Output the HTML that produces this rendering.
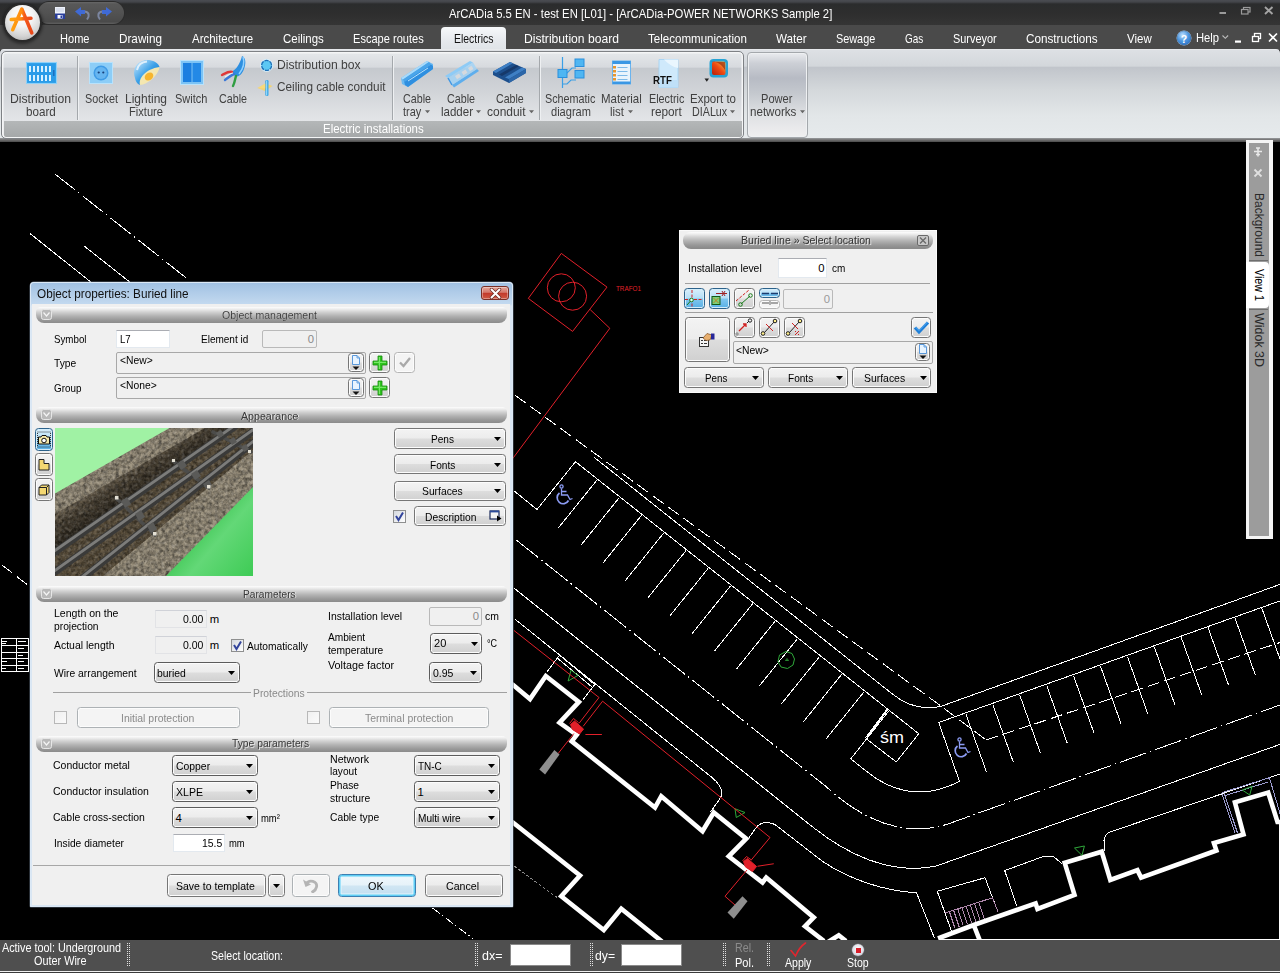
<!DOCTYPE html>
<html>
<head>
<meta charset="utf-8">
<title>ArCADia</title>
<style>
*{box-sizing:border-box;margin:0;padding:0}
html,body{width:1280px;height:973px;overflow:hidden;background:#000}
body{font-family:"Liberation Sans",sans-serif;font-size:12px;color:#000;position:relative}
.abs{position:absolute}
.t{position:absolute;white-space:nowrap;line-height:1}
/* title bar */
#titlebar{left:0;top:0;width:1280px;height:26px;background:linear-gradient(#4a4c52 0,#43454a 2px,#2b2c2d 4px,#2e2e2e 14px,#353535 25px)}
#tabrow{left:0;top:25px;width:1280px;height:25px;background:#4a4a4a}
#qat{left:38px;top:2px;width:86px;height:22px;border-radius:11px;background:linear-gradient(#686868 0,#585858 2px,#525252 50%,#4a4a4a 90%,#606060 100%);box-shadow:0 0 0 1px #2c2c2c}
#appbtn{left:4.500px;top:4.500px;width:35.500px;height:35.500px;border-radius:50%;background:radial-gradient(circle at 50% 30%,#fff 0,#f4f4f4 35%,#d4d4d4 68%,#a4a4a4 100%);box-shadow:0 0 0 2px #2a2a2a,0 1px 3px 3px rgba(0,0,0,.4)}
#acttab{left:441px;top:27px;width:65px;height:23px;border-radius:4px 4px 0 0;background:linear-gradient(#f6f8fa,#e6e9ed 60%,#dfe3e7)}
/* ribbon */
#ribbon{left:0;top:49px;width:1280px;height:93px;background:linear-gradient(#eceef0 0,#dde0e4 1.500px,#d3d7db 17px,#c1c5cb 18.500px,#d4d8db 41px,#e2e6e8 66px,#e6eaec 89px,#8e9092 89.500px,#6e6e6e 91px,#4a4a4a 93px);border-radius:4px 4px 0 0}
#grp{left:1px;top:51px;width:743px;height:88px;border-radius:5px;border:1px solid #7e8185;box-shadow:inset 0 0 0 1.500px #f4f5f6;background:linear-gradient(#e5e8eb 0,#d7dade 15px,#c5c9ce 16.500px,#d2d5d9 41px,#e0e2e5 63px,#e4e6e8 71px)}
#grplbl{left:4px;top:121px;width:738px;height:16px;background:linear-gradient(#b4b7b8,#a5a8a9);border-radius:0 0 2px 2px}
.sep{width:1px;background:#a4a8ac;box-shadow:1px 0 0 #eef0f2;top:56px;height:64px}
#pn{left:747px;top:52px;width:61px;height:86px;border-radius:4px;border:1px solid #a4a8ac;box-shadow:inset 0 0 0 1px #eef0f2;background:linear-gradient(#eaecef 0,#cdd0d6 10px,#b7bbc4 25px,#c4c8ce 40px,#dddfe2 60px,#eaeaec 76px,#f0f0f1 86px)}
/* status */
#status{left:0;top:940px;width:1280px;height:33px;background:linear-gradient(#4f4f4f 0,#4f4f4f 30.500px,#f0f0f0 31px,#f0f0f0 32px,#3a3a3a 32.500px)}
.grip{width:3px;border-left:1px dotted #e0e0e0;border-right:1px dotted #e0e0e0}

.shdr{border-radius:5px 5px 8px 8px;background:linear-gradient(#fdfdfd 0,#eeeeee 2px,#d2d2d2 5px,#b2b2b2 9px,#989898 13px,#8b8b8b 16px)}
.btn{border:1px solid #767676;border-radius:3.500px;background:linear-gradient(#f3f3f3 0,#ececec 48%,#dddddd 52%,#d0d0d0 100%);box-shadow:inset 0 0 0 1px #fcfcfc}
.btn.cmb{border-color:#5c5c5c}
.btn.dis{border-color:#b5b5b5;background:#f4f4f4}
.btn.dis2{border-color:#adb2b5;background:#f4f4f4}
.btn.act{border-color:#2c628b;background:linear-gradient(#d8effb 0,#b6dff6 48%,#80c6ee 52%,#58b0e6 100%);box-shadow:inset 0 0 0 1px #d4edfa}
.btn.def{border-color:#3c7fb1;box-shadow:inset 0 0 0 1.500px #5ecdf4, inset 0 0 0 2.500px #e4f6fd;background:linear-gradient(#f0f8fc 0,#e6f2f9 48%,#d0e6f3 52%,#c2def0 100%)}
.inp{background:#fff;border:1px solid #e3e9ef;border-top-color:#abadb3}
.inpd{background:#f0f0f0;border:1px solid #b9b9b9;border-radius:2px}
.inpd2{background:#f0f0f0;border:1px solid #e2e3e6;border-top-color:#d0d2d8}
.box{background:#f0f0f0;border:1px solid #a8a8a8;border-radius:2px}

.f{font-size:11px}
</style>
</head>
<body>
<svg class="abs" style="left:0;top:140px" width="1280" height="800" viewBox="0 140 1280 800" shape-rendering="crispEdges" fill="none">
<rect x="0" y="140" width="1280" height="800" fill="#000"/>
<g stroke="#fff" stroke-width="1">
<path d="M54.700 173.750 L187.500 279" stroke-dasharray="26 4 1.500 4"/>
<path d="M30.300 233.750 L92 283"/><path d="M84.400 246.250 L131 283"/>
<path d="M2 565 L27 584.500" stroke-dasharray="13.500 5.500"/>
<path d="M432.600 908 L473.300 939" stroke-dasharray="9 3 1.500 3"/>
<path d="M514.500 394.800 L941.250 706.250 L986.250 740" stroke-dasharray="13.500 5.500"/>
<path d="M986.250 740 L1280 642.500" stroke-dasharray="12 5"/>
<path d="M593.750 457 L893 694.500 Q915 712 941.250 706.250 L1280 584.400"/>
<path d="M514.500 491.250 L537 509.500 L575.500 461.750 L918.750 733.750"/>
<path d="M597.00 480.00 L558.60 527.60"/>
<path d="M619.25 497.66 L580.85 545.26"/>
<path d="M641.50 515.32 L603.10 562.92"/>
<path d="M663.75 532.98 L625.35 580.58"/>
<path d="M686.00 550.64 L647.60 598.24"/>
<path d="M708.25 568.30 L669.85 615.90"/>
<path d="M730.50 585.96 L692.10 633.56"/>
<path d="M752.75 603.62 L714.35 651.22"/>
<path d="M775.00 621.28 L736.60 668.88"/>
<path d="M797.25 638.94 L758.85 686.54"/>
<path d="M819.50 656.60 L781.10 704.20"/>
<path d="M841.75 674.26 L803.35 721.86"/>
<path d="M864.00 691.92 L825.60 739.52"/>
<path d="M887.500 710 L866.250 738.750 L896.250 762 L918.750 733.750"/>
<path d="M886.800 709.400 L865.500 738 M888.800 711 L850.500 759.200"/>
<path d="M850 758.250 L868 772.500 C886 787 918 803 959.500 781.400 L938.750 722.500 L1280 600.900"/>
<path d="M966.00 714.50 L986.50 772.00"/>
<path d="M992.90 704.85 L1013.40 762.35"/>
<path d="M1019.80 695.20 L1040.30 752.70"/>
<path d="M1046.70 685.55 L1067.20 743.05"/>
<path d="M1073.60 675.90 L1094.10 733.40"/>
<path d="M1100.50 666.25 L1121.00 723.75"/>
<path d="M1127.40 656.60 L1147.90 714.10"/>
<path d="M1154.30 646.95 L1174.80 704.45"/>
<path d="M1181.20 637.30 L1201.70 694.80"/>
<path d="M1208.10 627.65 L1228.60 685.15"/>
<path d="M1235.00 618.00 L1255.50 675.50"/>
<path d="M1261.90 608.35 L1282.40 665.85"/>
<path d="M516.250 540 L826 786.500 C858 816 902 841 951.250 822.800 L1280 705" stroke-dasharray="28 4 1.500 4"/>
<path d="M514.500 588.500 L812 826.500 C845 853 890 876 936.250 866 L1280 744.400"/>
<path d="M514.500 618.750 L712 777.500 Q727 790 719 800 L710.500 812"/>
<path d="M747.500 840 L755 829 Q762 819 775 824.500 L822 861 C850 880 885 891 916.500 892.750 L934.400 938"/>
<path d="M951.250 930.600 L937.200 891.250 L985 877.750 L998 912"/>
<path d="M1016.900 906.250 L1004.700 870.600 L1043 856.600 L1053.600 856.600 L1062.200 864"/>
<path d="M1104 851 L1104 840.600 Q1105 832 1114 830.700 L1280 774"/>
<path d="M546.500 672.400 L559.500 655.100 L594.700 684.600 L582.500 700.400 M558 658.700 L592.600 687.500"/>
<path d="M940 939.500 L1279.500 939.500 L1279.500 820"/>
</g>
<g stroke="#fff" stroke-width="1"><rect x="1.500" y="638.500" width="27" height="33"/><path d="M16.500 638.500v33 M1.500 645.500h27 M1.500 652.500h27 M1.500 658.500h27 M1.500 665.500h27"/><path d="M2 641.500h5 M2 643.500h4 M18 641.500h8 M18 648.500h6 M18 655.500h5 M2 661.500h5 M18 661.500h6 M2 668.500h4 M18 668.500h6" stroke-width="1.500"/></g>
<path d="M514.500 866.250 L558.750 898.750" stroke="#8a8a8a" stroke-width="1" stroke-dasharray="3 2"/>
<g stroke="#9c9cd0" stroke-width="1"><path d="M1221.500 792.800 L1235.100 833.500 M1223.800 792 L1237.400 832.700 M1222.500 792.500 L1269.400 777.700 L1280 813.500 M1224 796 L1268 782"/></g>
<g stroke="#b088ac" stroke-width="1"><path d="M945.600 912.800 L992.500 897.800 L998.100 911.900"/>
<path d="M949.40 911.60 L954.90 928.10"/>
<path d="M953.60 910.26 L959.10 926.76"/>
<path d="M957.80 908.92 L963.30 925.42"/>
<path d="M962.00 907.58 L967.50 924.08"/>
<path d="M966.20 906.24 L971.70 922.74"/>
<path d="M970.40 904.90 L975.90 921.40"/>
<path d="M974.60 903.56 L980.10 920.06"/>
<path d="M978.80 902.22 L984.30 918.72"/>
</g>
<g stroke="#fff" stroke-width="4.600" stroke-linejoin="miter" shape-rendering="geometricPrecision">
<path d="M512 684 L530 699 L545.800 676 L578.900 701.900 L559.500 722.700 L576.700 735 L571.700 741.400 L655 807.500 L661.250 796.250 L702.500 831.250 L713.750 812.500 L746.250 838.750 L728.750 856.250 L762.500 882.500 L766.250 877.500 L813.750 917.500 L805 926.250 L824 941"/>
<path d="M828 942 L838.750 935.300 L846 941"/>
<path d="M512 821.700 L580 875.500 L561.250 896.250 L603.750 930 L621.250 908.750 L662 941.500"/>
<path d="M938 938.500 L973.750 925 L1035.600 903.400 L1037.500 909 L1074.500 894.900 L1064.700 862.800 L1101.700 851.700 L1110.300 880 L1137.400 870.200 L1141.100 877.600 L1216.400 850.500 L1213.900 843 L1243.500 834.400 L1234.900 802.400 L1268.200 792.500 L1277.500 822 L1282 822 M973.750 925 L980 941"/>
</g>
<g stroke="#2fa83a" stroke-width="1" shape-rendering="geometricPrecision"><path d="M571 670.200 L578.200 675.300 L568.100 681z"/><path d="M735 808.750 L745 812.500 L736.250 817.500z"/><path d="M1074.500 848 L1084.400 846 L1082 855.400z"/><path d="M1242.300 790 L1252.100 786.300 L1249.700 795z"/>
<path d="M786 651.500 L792 653.500 L794.500 659 L793 665 L787.500 668.500 L781 667 L778 661.500 L779.500 655z"/><path d="M785.500 660.500 l1.500-2 l1.500 2z" stroke-width=".8"/></g>
<g stroke="#e2202a" stroke-width="1" shape-rendering="geometricPrecision">
<path d="M561.300 253.400 L607 287.100 L572.600 331.400 L528.300 298.400z"/><circle cx="561.300" cy="287.800" r="14"/><circle cx="572.600" cy="296.200" r="14"/>
<path d="M590.200 309.600 L609.800 328.300 L512 459.500"/>
<path d="M514 630.500 L599 697.500 L578.900 723.500"/>
<path d="M583.200 726.300 L602.600 701.200 L770 837.500 L751.250 860"/>
<path d="M569.600 723.500 L573.500 718.500 L578.500 722.500"/>
<path d="M570.500 724.500 L574.500 721 L583.500 729 L579.600 734 L572.400 729.500z" fill="#e2202a"/>
<path d="M585.400 734.500 L601.900 734.500"/><path d="M573.900 733.500 L558 753.700"/>
<path d="M742.500 861 L746.500 856.500 L751.500 860"/>
<path d="M743.500 861.500 L747.500 858.500 L756.500 866.500 L752.500 871.500 L745.500 867z" fill="#e2202a"/>
<path d="M757.500 866.250 L773.750 863.750"/><path d="M747 870 L725 896.250 L735 905"/>
</g>
<text x="616" y="291" font-family="Liberation Sans, sans-serif" font-size="7.500" fill="#e2202a" textLength="25" lengthAdjust="spacingAndGlyphs" shape-rendering="geometricPrecision">TRAFO1</text>
<g fill="#8e8e8e" shape-rendering="geometricPrecision"><path d="M554.400 750 L559.500 754.400 L545.100 774.500 L539.300 769.500z"/><path d="M742.500 896.250 L747.500 901.250 L733.750 918.750 L727.500 912.500z"/></g>
<g transform="translate(554 484)" stroke="#8c9cf4" stroke-width="1.300" shape-rendering="geometricPrecision"><circle cx="7.500" cy="2.500" r="1.600"/><path d="M7.500 4.500 V11 H13.500 L16 15.500 L18.500 14.500 M7.500 7.500 H12.500"/><path d="M5.500 9 A6 6 0 1 0 14.500 16.500" stroke-width="1.700"/></g>
<g transform="translate(952 737)" stroke="#8c9cf4" stroke-width="1.300" shape-rendering="geometricPrecision"><circle cx="7.500" cy="2.500" r="1.600"/><path d="M7.500 4.500 V11 H13.500 L16 15.500 L18.500 14.500 M7.500 7.500 H12.500"/><path d="M5.500 9 A6 6 0 1 0 14.500 16.500" stroke-width="1.700"/></g>
<text x="880" y="742.500" font-family="Liberation Sans, sans-serif" font-size="17" fill="#fff" textLength="24" lengthAdjust="spacingAndGlyphs" shape-rendering="geometricPrecision">śm</text>
</svg>
<div class="abs" id="titlebar"></div>
<div class="abs" id="tabrow"></div>
<div class="t" style="left:448.80px;top:7.93px;font-size:12.6px;color:#fff;transform:scaleX(0.8979);transform-origin:0 0;">ArCADia 5.5 EN - test EN [L01] - [ArCADia-POWER NETWORKS Sample 2]</div>
<div class="abs" id="qat"></div>
<svg class="abs" style="left:50px;top:3px" width="70" height="20" viewBox="0 0 70 20">
<rect x="5" y="4" width="10" height="12" fill="#2a3f9c"/><rect x="5" y="4" width="10" height="6.500" fill="#eef2fa"/><rect x="6" y="5.500" width="8" height="1" fill="#c8d0e4"/><rect x="6" y="7.500" width="8" height="1" fill="#c8d0e4"/><rect x="7.500" y="12" width="5" height="3.500" fill="#f4f6fb"/><rect x="10.500" y="12.500" width="1.500" height="2.500" fill="#2a3f9c"/>
<path d="M25 8.500 l6-4.500 v3 h4 v4 h-4 v2.500z" fill="#3f6ad6"/><path d="M35 8.500 c4 1 5 4 2 8" stroke="#7c86a0" stroke-width="2" fill="none"/>
<path d="M62 8.500 l-6-4.500 v3 h-4 v4 h4 v2.500z" fill="#3f6ad6"/><path d="M52 8.500 c-4 1-5 4-2 8" stroke="#7c86a0" stroke-width="2" fill="none"/>
</svg>
<div class="abs" id="acttab"></div>
<div class="t" style="left:59.80px;top:33.23px;font-size:12.6px;color:#fff;transform:scaleX(0.8777);transform-origin:0 0;">Home</div>
<div class="t" style="left:119.30px;top:33.23px;font-size:12.6px;color:#fff;transform:scaleX(0.9304);transform-origin:0 0;">Drawing</div>
<div class="t" style="left:192.30px;top:33.23px;font-size:12.6px;color:#fff;transform:scaleX(0.9111);transform-origin:0 0;">Architecture</div>
<div class="t" style="left:282.80px;top:33.23px;font-size:12.6px;color:#fff;transform:scaleX(0.9092);transform-origin:0 0;">Ceilings</div>
<div class="t" style="left:352.80px;top:33.23px;font-size:12.6px;color:#fff;transform:scaleX(0.8784);transform-origin:0 0;">Escape routes</div>
<div class="t" style="left:453.55px;top:33.23px;font-size:12.6px;color:#111;transform:scaleX(0.8297);transform-origin:0 0;">Electrics</div>
<div class="t" style="left:523.55px;top:33.23px;font-size:12.6px;color:#fff;transform:scaleX(0.9620);transform-origin:0 0;">Distribution board</div>
<div class="t" style="left:647.80px;top:33.23px;font-size:12.6px;color:#fff;transform:scaleX(0.9179);transform-origin:0 0;">Telecommunication</div>
<div class="t" style="left:776.05px;top:33.23px;font-size:12.6px;color:#fff;transform:scaleX(0.9280);transform-origin:0 0;">Water</div>
<div class="t" style="left:836.05px;top:33.23px;font-size:12.6px;color:#fff;transform:scaleX(0.8620);transform-origin:0 0;">Sewage</div>
<div class="t" style="left:905.30px;top:33.23px;font-size:12.6px;color:#fff;transform:scaleX(0.7898);transform-origin:0 0;">Gas</div>
<div class="t" style="left:953.10px;top:33.23px;font-size:12.6px;color:#fff;transform:scaleX(0.8667);transform-origin:0 0;">Surveyor</div>
<div class="t" style="left:1026.10px;top:33.23px;font-size:12.6px;color:#fff;transform:scaleX(0.9308);transform-origin:0 0;">Constructions</div>
<div class="t" style="left:1127.10px;top:33.23px;font-size:12.6px;color:#fff;transform:scaleX(0.9120);transform-origin:0 0;">View</div>
<div class="t" style="left:1196.10px;top:32.23px;font-size:12.6px;color:#fff;transform:scaleX(0.8914);transform-origin:0 0;">Help</div>
<div class="abs" style="left:1177px;top:31px;width:14px;height:14px;border-radius:50%;background:radial-gradient(circle at 40% 30%,#bfe0ff 0,#4d97e0 45%,#1f5fb5 100%);box-shadow:0 0 0 .5px #9cc3ee"></div>
<div class="t" style="left:1180.80px;top:34.21px;font-size:10.5px;color:#fff;font-weight:bold;">?</div>
<svg class="abs" style="left:1220px;top:30px" width="60" height="18" viewBox="0 0 60 18">
<path d="M2.5 5.500 l2.800 2.800 l2.800-2.800" stroke="#bbb" stroke-width="1.100" fill="none"/>
<rect x="15" y="10.5" width="6" height="2.200" fill="#fff"/>
<rect x="34.500" y="3.500" width="6" height="5" fill="none" stroke="#fff" stroke-width="1.300"/><rect x="32.500" y="6.500" width="6" height="5" fill="#4b4b4b" stroke="#fff" stroke-width="1.300"/>
<path d="M49 3.500 l8 8 M57 3.500 l-8 8" stroke="#fff" stroke-width="1.700"/>
</svg>
<svg class="abs" style="left:1215px;top:2px" width="62" height="18" viewBox="0 0 62 18">
<rect x="4.500" y="10" width="6.500" height="2" fill="#9a9a9a"/>
<rect x="28.500" y="5.500" width="6.500" height="4.500" fill="none" stroke="#9a9a9a" stroke-width="1.200"/><rect x="26.500" y="7.500" width="6.500" height="4.500" fill="#303030" stroke="#9a9a9a" stroke-width="1.200"/>
<path d="M50 5 l7.500 7 M57.500 5 l-7.500 7" stroke="#a4a4a4" stroke-width="1.900"/>
</svg>
<div class="abs" id="ribbon"></div>
<div class="abs" id="grp"></div>
<div class="abs" id="grplbl"></div>
<div class="t" style="left:323.40px;top:123.10px;font-size:12.4px;color:#fff;transform:scaleX(0.9257);transform-origin:0 0;">Electric installations</div>
<div class="abs" id="pn"></div>
<div class="abs sep" style="left:77px"></div>
<div class="abs sep" style="left:392px"></div>
<div class="abs sep" style="left:539px"></div>
<div class="t" style="left:10.20px;top:93.10px;font-size:12.4px;color:#404040;transform:scaleX(0.9835);transform-origin:0 0;">Distribution</div>
<div class="t" style="left:26.40px;top:106.40px;font-size:12.4px;color:#404040;transform:scaleX(0.9396);transform-origin:0 0;">board</div>
<div class="t" style="left:85.20px;top:93.10px;font-size:12.4px;color:#404040;transform:scaleX(0.8705);transform-origin:0 0;">Socket</div>
<div class="t" style="left:125.40px;top:93.10px;font-size:12.4px;color:#404040;transform:scaleX(0.9669);transform-origin:0 0;">Lighting</div>
<div class="t" style="left:129.40px;top:106.40px;font-size:12.4px;color:#404040;transform:scaleX(0.8972);transform-origin:0 0;">Fixture</div>
<div class="t" style="left:175.40px;top:93.10px;font-size:12.4px;color:#404040;transform:scaleX(0.8871);transform-origin:0 0;">Switch</div>
<div class="t" style="left:219.40px;top:93.10px;font-size:12.4px;color:#404040;transform:scaleX(0.8642);transform-origin:0 0;">Cable</div>
<div class="t" style="left:277.20px;top:59.10px;font-size:12.4px;color:#404040;transform:scaleX(0.9782);transform-origin:0 0;">Distribution box</div>
<div class="t" style="left:277.20px;top:81.10px;font-size:12.4px;color:#404040;transform:scaleX(0.9491);transform-origin:0 0;">Ceiling cable conduit</div>
<div class="t" style="left:402.80px;top:93.10px;font-size:12.4px;color:#404040;transform:scaleX(0.8642);transform-origin:0 0;">Cable</div>
<div class="t" style="left:403.20px;top:106.40px;font-size:12.4px;color:#404040;transform:scaleX(0.8805);transform-origin:0 0;">tray</div>
<div class="t" style="left:446.80px;top:93.10px;font-size:12.4px;color:#404040;transform:scaleX(0.8642);transform-origin:0 0;">Cable</div>
<div class="t" style="left:440.80px;top:106.40px;font-size:12.4px;color:#404040;transform:scaleX(0.9284);transform-origin:0 0;">ladder</div>
<div class="t" style="left:496.40px;top:93.10px;font-size:12.4px;color:#404040;transform:scaleX(0.8581);transform-origin:0 0;">Cable</div>
<div class="t" style="left:486.80px;top:106.40px;font-size:12.4px;color:#404040;transform:scaleX(0.9654);transform-origin:0 0;">conduit</div>
<div class="t" style="left:545.40px;top:93.10px;font-size:12.4px;color:#404040;transform:scaleX(0.8706);transform-origin:0 0;">Schematic</div>
<div class="t" style="left:550.80px;top:106.40px;font-size:12.4px;color:#404040;transform:scaleX(0.8929);transform-origin:0 0;">diagram</div>
<div class="t" style="left:601.40px;top:93.10px;font-size:12.4px;color:#404040;transform:scaleX(0.9251);transform-origin:0 0;">Material</div>
<div class="t" style="left:610.20px;top:106.40px;font-size:12.4px;color:#404040;transform:scaleX(0.9238);transform-origin:0 0;">list</div>
<div class="t" style="left:649.40px;top:93.10px;font-size:12.4px;color:#404040;transform:scaleX(0.8708);transform-origin:0 0;">Electric</div>
<div class="t" style="left:651.40px;top:106.40px;font-size:12.4px;color:#404040;transform:scaleX(0.9508);transform-origin:0 0;">report</div>
<div class="t" style="left:690.20px;top:93.10px;font-size:12.4px;color:#404040;transform:scaleX(0.9270);transform-origin:0 0;">Export to</div>
<div class="t" style="left:692.20px;top:106.40px;font-size:12.4px;color:#404040;transform:scaleX(0.8656);transform-origin:0 0;">DIALux</div>
<div class="t" style="left:761.40px;top:93.10px;font-size:12.4px;color:#404040;transform:scaleX(0.8934);transform-origin:0 0;">Power</div>
<div class="t" style="left:749.80px;top:106.40px;font-size:12.4px;color:#404040;transform:scaleX(0.9351);transform-origin:0 0;">networks</div>
<svg class="abs" style="left:425.1px;top:110px" width="6" height="4"><path d="M0 .3h5L2.500 3.300z" fill="#666"/></svg>
<svg class="abs" style="left:476.1px;top:110px" width="6" height="4"><path d="M0 .3h5L2.500 3.300z" fill="#666"/></svg>
<svg class="abs" style="left:529.1px;top:110px" width="6" height="4"><path d="M0 .3h5L2.500 3.300z" fill="#666"/></svg>
<svg class="abs" style="left:627.5px;top:110px" width="6" height="4"><path d="M0 .3h5L2.500 3.300z" fill="#666"/></svg>
<svg class="abs" style="left:729.9px;top:110px" width="6" height="4"><path d="M0 .3h5L2.500 3.300z" fill="#666"/></svg>
<svg class="abs" style="left:799.9px;top:110px" width="6" height="4"><path d="M0 .3h5L2.500 3.300z" fill="#666"/></svg>

<!-- distribution board -->
<svg class="abs" style="left:26px;top:62px" width="31" height="22" viewBox="0 0 31 22">
<rect x=".5" y=".5" width="30" height="21" fill="#39a9ee" stroke="#8ed0f8"/>
<rect x="1.500" y="1.500" width="28" height="19" fill="#2b9ce8"/>
<g fill="#d8f1ff"><rect x="3" y="4" width="2" height="6"/><rect x="7" y="4" width="2" height="6"/><rect x="11" y="4" width="2" height="6"/><rect x="15" y="4" width="2" height="6"/><rect x="19" y="4" width="2" height="6"/><rect x="23" y="4" width="2" height="6"/>
<rect x="3" y="13" width="2" height="6"/><rect x="7" y="13" width="2" height="6"/><rect x="11" y="13" width="2" height="6"/><rect x="15" y="13" width="2" height="6"/><rect x="19" y="13" width="2" height="6"/><rect x="23" y="13" width="2" height="6"/></g>
<rect x="27" y="8" width="1.500" height="6" fill="#1b6fc0"/>
</svg>
<!-- socket -->
<svg class="abs" style="left:89px;top:62px" width="24" height="22" viewBox="0 0 24 22">
<rect x=".5" y=".5" width="23" height="21" fill="#8ccdf7" stroke="#b9e2fb"/>
<circle cx="12" cy="11" r="7.500" fill="#3f9be6"/><circle cx="12" cy="11" r="6" fill="#66b5f0"/>
<circle cx="9.700" cy="10.500" r="1.100" fill="#18407a"/><circle cx="14.300" cy="10.500" r="1.100" fill="#18407a"/>
</svg>
<!-- lighting fixture -->
<svg class="abs" style="left:132px;top:58px" width="29" height="30" viewBox="0 0 29 30">
<defs><linearGradient id="lg1" x1="0" y1="0" x2="1" y2="1"><stop offset="0" stop-color="#d8f0ff"/><stop offset=".5" stop-color="#3aa0e8"/><stop offset="1" stop-color="#1968b8"/></linearGradient></defs>
<path d="M3 20 C-1 9 8 1 17 2 C23 3 27 6 27.500 9 C22 16 13 24 8 27 C5 26 3.500 23 3 20z" fill="url(#lg1)"/>
<path d="M8 27 C6 21 13 11 27.500 9 C27 15 18 26 8 27z" fill="#f4e7b0"/>
<ellipse cx="17" cy="18.500" rx="4.600" ry="3.600" fill="#f6b52e" transform="rotate(-35 17 18.500)"/>
<path d="M5 12 C6 7 10 4 15 3.500" stroke="#fff" stroke-width="2" fill="none" opacity=".7"/>
</svg>
<!-- switch -->
<svg class="abs" style="left:180px;top:60px" width="24" height="25" viewBox="0 0 24 25">
<rect x=".5" y=".5" width="23" height="24" fill="#7cc3f5" stroke="#b9e2fb"/>
<rect x="3" y="3" width="8.500" height="19" fill="#1b7fe0"/><rect x="12.500" y="3" width="8.500" height="19" fill="#2389e6"/>
</svg>
<!-- cable -->
<svg class="abs" style="left:220px;top:55px" width="29" height="33" viewBox="0 0 29 33">
<path d="M22 1 C27 3 26 12 22 18 C20 21 17 22 15 21 L11 17 C16 15 20 9 22 1z" fill="#2d8fe0"/>
<path d="M23 2 C25 8 23 14 19 19" stroke="#8fd0ff" stroke-width="1.500" fill="none"/>
<path d="M12 17 C9 16 6 18 2 20" stroke="#e03838" stroke-width="2.400" fill="none" stroke-linecap="round"/>
<path d="M14 19 C11 20 8 23 5 25" stroke="#3b78d8" stroke-width="2.400" fill="none" stroke-linecap="round"/>
<path d="M16 21 C15 24 15 27 13 31" stroke="#2f9e42" stroke-width="2.400" fill="none" stroke-linecap="round"/>
<path d="M13 18 C11 18 8 20 5 22" stroke="#f0f0f0" stroke-width="1.200" fill="none"/>
</svg>
<!-- distribution box -->
<svg class="abs" style="left:259px;top:58px" width="15" height="15" viewBox="0 0 15 15">
<circle cx="7.600" cy="7.400" r="6.600" fill="#d4f0fc" opacity=".8"/>
<circle cx="7.600" cy="7.400" r="5" fill="#5cc8f4" stroke="#1e70b8" stroke-width="1.300" stroke-dasharray="4.200 1"/>
</svg>
<!-- ceiling cable conduit -->
<svg class="abs" style="left:257px;top:79px" width="17" height="18" viewBox="0 0 17 18">
<path d="M.5 9 L8.500 4.500 L15.500 7 L8 12z" fill="#f6d467" opacity=".9"/>
<rect x="8.300" y="1" width="3.200" height="16" rx="1.200" fill="#3aa6e6"/>
<rect x="9" y="1.500" width="1.200" height="15" fill="#8fd6fa"/>
<path d="M.5 9 L8.300 4.600 V9.500z" fill="#f8dc80" opacity=".7"/>
</svg>
<!-- cable tray -->
<svg class="abs" style="left:400px;top:59px" width="34" height="30" viewBox="0 0 34 30">
<path d="M1 19 L27 2 L33 5 L33 10 L8 28 L2 25z" fill="#6ab8f0"/>
<path d="M1 19 L27 2 L29 3 L3 20.500z" fill="#a9dafa"/>
<path d="M4 22 L31 5.500 L33 7 L33 10 L8 28 L5 26z" fill="#2f8fe0"/>
<path d="M3 20.500 L29 3 L31 5.500 L4.500 23z" fill="#4aa5ea"/>
<path d="M8 22 L28 9" stroke="#b8e2fb" stroke-width="1"/>
</svg>
<!-- cable ladder -->
<svg class="abs" style="left:444px;top:59px" width="36" height="30" viewBox="0 0 36 30">
<path d="M1 17 L26 2 L29 3.500 L4 19z" fill="#8ecbf6"/>
<path d="M8 26 L33 10 L35 12 L10 28.500z" fill="#5eaeed"/>
<path d="M4 19 L29 3.500 L33 10 L8 26z" fill="#9bd2f8" opacity=".75"/>
<g fill="#d6d9dd"><path d="M11 17 l4-2.500 l2 3.200 l-4 2.500z"/><path d="M17.500 13 l4-2.500 l2 3.200 l-4 2.500z"/><path d="M24 9 l3.500-2.200 l2 3.200 l-3.500 2.200z"/></g>
<path d="M4 19 L8 26" stroke="#3f97e4" stroke-width="1.500"/>
</svg>
<!-- cable conduit -->
<svg class="abs" style="left:493px;top:62px" width="34" height="21" viewBox="0 0 34 21">
<path d="M0 9.500 L17 0 L33 7 L33 11 L16 21 L0 13z" fill="#1d4f8c"/>
<path d="M0 9.500 L17 0 L20 1.200 L3 11z" fill="#3e7fc4"/>
<path d="M6 12.500 L23 3 L26 4.300 L9 14z" fill="#16396a"/>
<path d="M12 15.500 L29 5.600 L33 7 L16 17z" fill="#3e7fc4"/>
<path d="M16 17 L33 7 L33 11 L16 21z" fill="#2c66a8"/>
</svg>
<!-- schematic diagram -->
<svg class="abs" style="left:557px;top:56px" width="28" height="33" viewBox="0 0 28 33">
<path d="M5.500 1 V32 M5.500 17 H10 L15 12 H19 M5.500 28 H10 L14 24 H19" stroke="#3a9fe6" stroke-width="1.200" fill="none"/>
<rect x="18" y="3" width="9" height="7.500" fill="#4fb6f2" stroke="#2a8fdc"/><rect x="1" y="13.500" width="9" height="8" fill="#4fb6f2" stroke="#2a8fdc"/><rect x="18" y="14.500" width="9" height="7.500" fill="#4fb6f2" stroke="#2a8fdc"/>
</svg>
<!-- material list -->
<svg class="abs" style="left:611px;top:60px" width="21" height="25" viewBox="0 0 21 25">
<rect x="1.500" y="1" width="18" height="23" fill="#e8f3fc" stroke="#6bb4ee"/>
<rect x="1.500" y="1" width="18" height="3" fill="#3a97e4"/><rect x="1.500" y="21.500" width="18" height="2.500" fill="#3a97e4"/>
<g fill="#e8962e"><rect x="2" y="6" width="3" height="2.500"/><rect x="2" y="10" width="3" height="2.500"/><rect x="2" y="14" width="3" height="2.500"/><rect x="2" y="18" width="3" height="2.500"/></g>
<g stroke="#7db9e8" stroke-width="1"><path d="M6.500 7.500h10M6.500 11.500h10M6.500 15.500h10M6.500 19.500h10"/></g>
</svg>
<!-- RTF -->
<svg class="abs" style="left:652px;top:58px" width="28" height="31" viewBox="0 0 28 31">
<path d="M7 1.500 H26 V29.500 H7z" fill="#cfe9fb" stroke="#9fd0f5" stroke-width=".8"/>
<path d="M12 1.500 C16 6 21 9 26 10 V1.500z" fill="#eaf6fe"/>
<path d="M7 22 H26 V29.500 H7z" fill="#bfe0f8"/>
</svg>
<!-- export to dialux -->
<svg class="abs" style="left:703px;top:57px" width="27" height="27" viewBox="0 0 27 27">
<defs><linearGradient id="dg" x1="0" y1="1" x2="1" y2="0"><stop offset="0" stop-color="#b5200c"/><stop offset=".5" stop-color="#ee4a12"/><stop offset="1" stop-color="#ffc04a"/></linearGradient></defs>
<rect x="6.500" y="2" width="18.500" height="18.500" rx="4" fill="#27a3d4"/>
<rect x="9" y="4.500" width="13.500" height="13.500" rx="2" fill="url(#dg)"/>
<path d="M8 5 C12 4 18 6 22 13 V5z" fill="#7a1408" opacity=".55"/>
<path d="M1.500 21.500 h4.500 l-2.200 3.200z" fill="#222"/>
</svg>

<div class="t" style="left:653.40px;top:74.71px;font-size:10.5px;color:#111;font-weight:bold;transform:scaleX(0.9211);transform-origin:0 0;">RTF</div>
<div class="abs" id="appbtn"></div>
<svg class="abs" style="left:0px;top:0px" width="44" height="44" viewBox="0 0 44 44">
<defs><linearGradient id="og" gradientUnits="userSpaceOnUse" x1="11" y1="20" x2="33" y2="22"><stop offset="0" stop-color="#ffa512"/><stop offset=".45" stop-color="#ff8a10"/><stop offset=".6" stop-color="#f4581a"/><stop offset="1" stop-color="#e8481a"/></linearGradient></defs>
<path d="M12.700 29.800 L21.800 9 L31.800 33 M11.200 19.600 L31 18.300" stroke="url(#og)" stroke-width="3.500" fill="none" stroke-linecap="round" stroke-linejoin="round"/>
</svg>
<div class="abs" id="status"></div>
<div class="t" style="left:1.80px;top:942.44px;font-size:12px;color:#fff;transform:scaleX(0.9010);transform-origin:0 0;">Active tool: Underground</div>
<div class="t" style="left:34.30px;top:954.94px;font-size:12px;color:#fff;transform:scaleX(0.9050);transform-origin:0 0;">Outer Wire</div>
<div class="abs grip" style="left:126.5px;top:943px;height:23px"></div>
<div class="t" style="left:210.50px;top:949.94px;font-size:12px;color:#fff;transform:scaleX(0.8847);transform-origin:0 0;">Select location:</div>
<div class="abs grip" style="left:475.0px;top:943px;height:23px"></div>
<div class="t" style="left:482.10px;top:949.74px;font-size:12px;color:#fff;transform:scaleX(1.0416);transform-origin:0 0;">dx=</div>
<div class="abs" style="left:510px;top:944px;width:61px;height:22px;background:#fff;border:1px solid #8a8a8a"></div>
<div class="abs grip" style="left:590.0px;top:943px;height:23px"></div>
<div class="t" style="left:594.60px;top:949.74px;font-size:12px;color:#fff;transform:scaleX(1.0162);transform-origin:0 0;">dy=</div>
<div class="abs" style="left:621px;top:944px;width:61px;height:22px;background:#fff;border:1px solid #8a8a8a"></div>
<div class="abs grip" style="left:722.5px;top:943px;height:23px"></div>
<div class="t" style="left:734.80px;top:941.94px;font-size:12px;color:#8c8c8c;transform:scaleX(0.8903);transform-origin:0 0;">Rel.</div>
<div class="t" style="left:734.80px;top:956.74px;font-size:12px;color:#fff;transform:scaleX(0.9189);transform-origin:0 0;">Pol.</div>
<div class="abs grip" style="left:767.0px;top:943px;height:23px"></div>
<svg class="abs" style="left:788px;top:942px" width="20" height="16" viewBox="0 0 20 16"><path d="M3 8.500 L7.500 14 C10 8 13 4 17.500 1" stroke="#e0262e" stroke-width="1.600" fill="none" stroke-linecap="round"/></svg>
<div class="t" style="left:784.70px;top:956.74px;font-size:12px;color:#fff;transform:scaleX(0.8795);transform-origin:0 0;">Apply</div>
<div class="abs" style="left:852px;top:944px;width:12px;height:12px;border-radius:50%;background:radial-gradient(circle at 50% 40%,#fff,#dcdce6 60%,#9a9aa8);box-shadow:0 0 0 .5px #777"></div>
<div class="abs" style="left:856px;top:948px;width:4.500px;height:4.500px;background:#d81e2a"></div>
<div class="t" style="left:846.50px;top:956.74px;font-size:12px;color:#fff;transform:scaleX(0.8791);transform-origin:0 0;">Stop</div>
<div class="abs" style="left:1246px;top:140px;width:27px;height:399px;background:#f4f4f4"></div>
<div class="abs" style="left:1249px;top:143px;width:20px;height:393px;background:#9c9c9c"></div>
<div class="abs" style="left:1246px;top:262px;width:23px;height:46px;background:#fff;border-radius:0 4px 4px 0"></div>
<div class="abs" style="left:1249px;top:260px;width:19px;height:1px;background:#6e6e6e"></div>
<div class="abs" style="left:1249px;top:309px;width:19px;height:1px;background:#6e6e6e"></div>
<svg class="abs" style="left:1251px;top:145px" width="14" height="36" viewBox="0 0 14 36">
<path d="M3 6.500h8 M7 2.500v9 M5 3h4 M5 9.500h4" stroke="#e8e8e8" stroke-width="1.600"/>
<path d="M3.500 24.500l7 7 M10.500 24.500l-7 7" stroke="#e0e0e0" stroke-width="1.800"/>
</svg>
<div class="t" style="left:1264.50px;top:193.00px;font-size:12px;color:#2a2a2a;transform-origin:0 0;transform:rotate(90deg) scaleX(0.9993)">Background</div>
<div class="t" style="left:1264.50px;top:268.50px;font-size:12px;color:#000;transform-origin:0 0;transform:rotate(90deg) scaleX(0.8938)">View 1</div>
<div class="t" style="left:1264.50px;top:312.50px;font-size:12px;color:#2a2a2a;transform-origin:0 0;transform:rotate(90deg) scaleX(1.0382)">Widok 3D</div>
<div class="abs" style="left:30px;top:282px;width:483px;height:625px;background:linear-gradient(#9fc0e2,#c3d9ef 22px,#d9e6f3 24px);border-radius:4px 4px 1px 1px;box-shadow:inset 0 0 0 1px #dbe8f5,0 0 0 .5px #55606e"></div>
<div class="abs" style="left:32px;top:304px;width:478px;height:601px;background:#f0f0f0"></div>
<div class="t" style="left:36.60px;top:288.09px;font-size:12.3px;color:#111;transform:scaleX(0.9564);transform-origin:0 0;">Object properties: Buried line</div>
<div class="abs" style="left:481px;top:286px;width:28px;height:14px;border-radius:3px;border:1px solid #7a2f26;box-shadow:inset 0 0 0 1px rgba(255,255,255,.35);background:linear-gradient(#e4a79b 0,#d4776a 45%,#c2382a 50%,#cf5a45 100%)"></div>
<svg class="abs" style="left:489px;top:288px" width="13" height="11" viewBox="0 0 13 11"><path d="M2.500 1.500 L10.500 9.500 M10.500 1.500 L2.500 9.500" stroke="#6a2a24" stroke-width="3.400" stroke-linecap="round"/><path d="M2.500 1.500 L10.500 9.500 M10.500 1.500 L2.500 9.500" stroke="#fff" stroke-width="2" stroke-linecap="round"/></svg>
<div class="abs shdr" style="left:36px;top:307px;width:471px;height:16px"></div><svg class="abs" style="left:41px;top:309px" width="11" height="11" viewBox="0 0 11 11"><rect x=".5" y=".5" width="10" height="10" rx="2" fill="#b9b9b9" stroke="#e6e6e6"/><path d="M2.500 3.500 L5.500 7 L8.500 3.500" stroke="#f4f4f4" stroke-width="1.200" fill="none"/></svg><div class="t" style="left:222.40px;top:310.23px;font-size:11.3px;color:#e8e8e8;transform:scaleX(0.9336);transform-origin:0 0;">Object management</div><div class="t" style="left:221.80px;top:309.63px;font-size:11.3px;color:#3a3a3a;transform:scaleX(0.9336);transform-origin:0 0;">Object management</div>
<div class="t" style="left:54.30px;top:333.63px;font-size:11.3px;color:#000;transform:scaleX(0.8625);transform-origin:0 0;">Symbol</div>
<div class="abs inp" style="left:116px;top:330px;width:54px;height:18px"></div>
<div class="t" style="left:119.70px;top:333.63px;font-size:11.3px;color:#000;transform:scaleX(0.8513);transform-origin:0 0;">L7</div>
<div class="t" style="left:200.50px;top:333.63px;font-size:11.3px;color:#000;transform:scaleX(0.8860);transform-origin:0 0;">Element id</div>
<div class="abs inpd" style="left:262px;top:330px;width:55px;height:18px"></div>
<div class="t" style="left:307.76px;top:333.63px;font-size:11.3px;color:#8a8a8a;">0</div>
<div class="t" style="left:54.30px;top:358.03px;font-size:11.3px;color:#000;transform:scaleX(0.9103);transform-origin:0 0;">Type</div>
<div class="abs box" style="left:116px;top:351.500px;width:250px;height:22px"></div>
<div class="t" style="left:119.70px;top:355.33px;font-size:11.3px;color:#000;transform:scaleX(0.9133);transform-origin:0 0;">&lt;New&gt;</div>
<div class="abs btn" style="left:348.0px;top:353.0px;width:16.0px;height:19.0px"></div><svg class="abs" style="left:351.0px;top:354.5px" width="10" height="16" viewBox="0 0 10 16"><path d="M1.500 .5h4.500l2.500 2.500v6.500h-7z" fill="#e8f4ff" stroke="#4a8fd8" stroke-width=".9"/><path d="M6 .5v2.500h2.500" fill="none" stroke="#4a8fd8" stroke-width=".8"/><path d="M1.500 11.500h7L5 15z" fill="#111"/></svg>
<div class="abs btn" style="left:369.0px;top:352.0px;width:21.0px;height:21.0px"></div><svg class="abs" style="left:371.5px;top:354.5px" width="16" height="16" viewBox="0 0 16 16"><path d="M6 1h4v5h5v4h-5v5h-4v-5h-5v-4h5z" fill="#2fc41e" stroke="#168a0c" stroke-width=".8"/><path d="M6.800 2h1.200v12h-1.200z M2 6.800h12v1.200h-12z" fill="#8af07a" opacity=".8"/></svg>
<div class="abs btn dis" style="left:394.0px;top:352.0px;width:21.0px;height:21.0px"></div>
<svg class="abs" style="left:398px;top:356px" width="14" height="12" viewBox="0 0 14 12"><path d="M2 6.500 L5.500 10 L12 2" stroke="#a9a9a9" stroke-width="2.300" fill="none"/></svg>
<div class="t" style="left:54.30px;top:382.73px;font-size:11.3px;color:#000;transform:scaleX(0.8724);transform-origin:0 0;">Group</div>
<div class="abs box" style="left:116px;top:376.500px;width:250px;height:22px"></div>
<div class="t" style="left:119.70px;top:380.33px;font-size:11.3px;color:#000;transform:scaleX(0.9127);transform-origin:0 0;">&lt;None&gt;</div>
<div class="abs btn" style="left:348.0px;top:378.0px;width:16.0px;height:19.0px"></div><svg class="abs" style="left:351.0px;top:379.5px" width="10" height="16" viewBox="0 0 10 16"><path d="M1.500 .5h4.500l2.500 2.500v6.500h-7z" fill="#e8f4ff" stroke="#4a8fd8" stroke-width=".9"/><path d="M6 .5v2.500h2.500" fill="none" stroke="#4a8fd8" stroke-width=".8"/><path d="M1.500 11.500h7L5 15z" fill="#111"/></svg>
<div class="abs btn" style="left:369.0px;top:377.0px;width:21.0px;height:21.0px"></div><svg class="abs" style="left:371.5px;top:379.5px" width="16" height="16" viewBox="0 0 16 16"><path d="M6 1h4v5h5v4h-5v5h-4v-5h-5v-4h5z" fill="#2fc41e" stroke="#168a0c" stroke-width=".8"/><path d="M6.800 2h1.200v12h-1.200z M2 6.800h12v1.200h-12z" fill="#8af07a" opacity=".8"/></svg>
<div class="abs shdr" style="left:36px;top:407px;width:471px;height:16px"></div><svg class="abs" style="left:41px;top:409px" width="11" height="11" viewBox="0 0 11 11"><rect x=".5" y=".5" width="10" height="10" rx="2" fill="#b9b9b9" stroke="#e6e6e6"/><path d="M2.500 3.500 L5.500 7 L8.500 3.500" stroke="#f4f4f4" stroke-width="1.200" fill="none"/></svg><div class="t" style="left:241.60px;top:411.13px;font-size:11.3px;color:#e8e8e8;transform:scaleX(0.9419);transform-origin:0 0;">Appearance</div><div class="t" style="left:241.00px;top:410.53px;font-size:11.3px;color:#3a3a3a;transform:scaleX(0.9419);transform-origin:0 0;">Appearance</div>
<div class="abs btn act" style="left:35.0px;top:428.0px;width:18.0px;height:23.0px"></div>
<div class="abs btn" style="left:35.0px;top:453.0px;width:18.0px;height:23.0px"></div>
<div class="abs btn" style="left:35.0px;top:478.0px;width:18.0px;height:23.0px"></div>
<svg class="abs" style="left:36px;top:429px" width="16" height="72" viewBox="0 0 16 72">
<rect x="1.500" y="3" width="13" height="15" fill="none" stroke="#222" stroke-width=".9" stroke-dasharray="1 1"/>
<path d="M2.500 8 h2.500 l1-1.500 h4 l1 1.500 h2.500 v7 h-11z" fill="#f6e9a8" stroke="#111" stroke-width="1"/><circle cx="8" cy="11.500" r="2.300" fill="#fff" stroke="#111" stroke-width="1"/>
<path d="M3 30.500 h5 v4 h5 v6.500 h-10z" fill="#f4d872" stroke="#222" stroke-width="1"/>
<path d="M3 58.500 l2.500-2.500 h7.500 v7.500 l-2.500 2.500 h-7.500z" fill="#f4d872" stroke="#222" stroke-width="1"/><path d="M3 58.500 h7.500 v7.500 M10.500 58.500 l2.500-2.500" fill="none" stroke="#222" stroke-width="1"/>
</svg>
<svg class="abs" style="left:55px;top:428px" width="198" height="148" viewBox="0 0 198 148">
<defs>
<filter id="nz" x="0" y="0" width="100%" height="100%"><feTurbulence type="fractalNoise" baseFrequency=".28" numOctaves="3" seed="7"/><feColorMatrix type="matrix" values="0 0 0 0 0  0 0 0 0 0  0 0 0 0 0  1.1 1.1 1.1 0 -1.250"/><feComposite in2="SourceGraphic" operator="in"/></filter>
<filter id="nz2" x="0" y="0" width="100%" height="100%"><feTurbulence type="fractalNoise" baseFrequency=".3" numOctaves="2" seed="11"/><feColorMatrix type="matrix" values="0 0 0 0 1  0 0 0 0 1  0 0 0 0 1  1 1 1 0 -1.300"/><feComposite in2="SourceGraphic" operator="in"/></filter>
<linearGradient id="gg" gradientUnits="userSpaceOnUse" x1="130" y1="90" x2="198" y2="148"><stop offset="0" stop-color="#2ebd43"/><stop offset=".45" stop-color="#63d877"/><stop offset="1" stop-color="#3ecb55"/></linearGradient>
<linearGradient id="wl" gradientUnits="userSpaceOnUse" x1="60" y1="40" x2="78" y2="68"><stop offset="0" stop-color="#867a66"/><stop offset=".5" stop-color="#4e4536"/><stop offset="1" stop-color="#2f291f"/></linearGradient>
<clipPath id="ic"><rect width="198" height="148"/></clipPath>
</defs>
<g clip-path="url(#ic)">
<rect width="198" height="148" fill="#9b917d"/>
<polygon points="0,86 150,0 180,0 0,124" fill="url(#wl)"/>
<polygon points="0,122 178,0 198,0 198,22 48,148 0,148" fill="#5c503c"/>
<rect width="198" height="148" fill="#2a2216" filter="url(#nz)" opacity=".5"/>
<rect width="198" height="148" fill="#fff" filter="url(#nz2)" opacity=".2"/>
<polygon points="0,0 114.500,0 0,65.600" fill="#a0f2a4"/>
<polygon points="111,148 198,59 198,148" fill="url(#gg)"/>
<g stroke="#4c4c4a" stroke-width="3.600" fill="none" stroke-linecap="round"><path d="M61 70 L100 107"/><path d="M118 33 L154 60"/><path d="M158 4 L196 24"/></g>
<g stroke-linecap="butt" fill="none">
<path d="M-3 126 L181 -2" stroke="#3a3a39" stroke-width="7"/><path d="M-3 124.600 L181 -3.400" stroke="#7c7c7a" stroke-width="2.800"/>
<path d="M-3 146 L201 1" stroke="#3a3a39" stroke-width="7"/><path d="M-3 144.600 L201 -.4" stroke="#7c7c7a" stroke-width="2.800"/>
<path d="M25 152 L201 12.500" stroke="#3a3a39" stroke-width="7"/><path d="M25 150.600 L201 11.100" stroke="#7c7c7a" stroke-width="2.800"/>
</g>
<g fill="#5a5a58"><path d="M66 73 l6-4 l4 7 l-6 4z"/><path d="M80 86 l6-4 l4 7 l-6 4z"/><path d="M92 98 l6-4 l4 7 l-6 4z"/><path d="M122 36 l6-4 l4 6 l-6 4z"/><path d="M136 46 l6-4 l4 6 l-6 4z"/><path d="M148 56 l6-4 l3 5 l-6 4z"/><path d="M161 5 l5-3 l3 5 l-5 3z"/><path d="M174 12 l5-3 l3 5 l-5 3z"/><path d="M186 19 l5-3 l3 5 l-5 3z"/></g>
<g fill="#e4e0d4"><rect x="60" y="68" width="3.500" height="3.500"/><rect x="98" y="104" width="3.500" height="3.500"/><rect x="117" y="31" width="3" height="3"/><rect x="152" y="57" width="3.500" height="3.500"/><rect x="193" y="22" width="3" height="3"/></g>
</g>
</svg>
<div class="abs btn" style="left:394.0px;top:428.0px;width:112.0px;height:21.0px"></div>
<div class="t" style="left:431.30px;top:433.83px;font-size:11.3px;color:#000;transform:scaleX(0.8930);transform-origin:0 0;">Pens</div>
<svg class="abs" style="left:494.0px;top:436.5px" width="8" height="5"><path d="M0 0h7L3.500 4z" fill="#000"/></svg>
<div class="abs btn" style="left:394.0px;top:454.0px;width:112.0px;height:20.0px"></div>
<div class="t" style="left:429.80px;top:459.93px;font-size:11.3px;color:#000;transform:scaleX(0.8988);transform-origin:0 0;">Fonts</div>
<svg class="abs" style="left:494.0px;top:462.5px" width="8" height="5"><path d="M0 0h7L3.500 4z" fill="#000"/></svg>
<div class="abs btn" style="left:394.0px;top:481.0px;width:112.0px;height:20.0px"></div>
<div class="t" style="left:422.25px;top:486.03px;font-size:11.3px;color:#000;transform:scaleX(0.9127);transform-origin:0 0;">Surfaces</div>
<svg class="abs" style="left:494.0px;top:488.7px" width="8" height="5"><path d="M0 0h7L3.500 4z" fill="#000"/></svg>
<div class="abs" style="left:393.0px;top:510.4px;width:13px;height:13px;border:1px solid #8e8f8f;background:linear-gradient(135deg,#d4d8de,#fff)"></div><svg class="abs" style="left:393.0px;top:510.4px" width="13" height="13" viewBox="0 0 13 13"><path d="M3 6 L5.500 10 L10 2.500" stroke="#32449c" stroke-width="2" fill="none"/></svg>
<div class="abs btn" style="left:414.0px;top:506.0px;width:92.0px;height:20.0px"></div>
<div class="t" style="left:425.40px;top:512.33px;font-size:11.3px;color:#000;transform:scaleX(0.9094);transform-origin:0 0;">Description</div>
<svg class="abs" style="left:489px;top:510px" width="13" height="12" viewBox="0 0 13 12"><rect x="1" y="1" width="9" height="8" fill="#f4f4f4" stroke="#1b2a5a" stroke-width="1.200"/><rect x="1" y=".6" width="9" height="1.800" fill="#2a4a9a"/><path d="M8 5.500 v6 l4.500-3z" fill="#000"/></svg>
<div class="abs shdr" style="left:36px;top:586px;width:471px;height:16px"></div><svg class="abs" style="left:41px;top:588px" width="11" height="11" viewBox="0 0 11 11"><rect x=".5" y=".5" width="10" height="10" rx="2" fill="#b9b9b9" stroke="#e6e6e6"/><path d="M2.500 3.500 L5.500 7 L8.500 3.500" stroke="#f4f4f4" stroke-width="1.200" fill="none"/></svg><div class="t" style="left:243.70px;top:589.33px;font-size:11.3px;color:#e8e8e8;transform:scaleX(0.9023);transform-origin:0 0;">Parameters</div><div class="t" style="left:243.10px;top:588.73px;font-size:11.3px;color:#3a3a3a;transform:scaleX(0.9023);transform-origin:0 0;">Parameters</div>
<div class="t" style="left:54.30px;top:608.23px;font-size:11.3px;color:#000;transform:scaleX(0.9332);transform-origin:0 0;">Length on the</div>
<div class="t" style="left:54.30px;top:620.83px;font-size:11.3px;color:#000;transform:scaleX(0.9103);transform-origin:0 0;">projection</div>
<div class="abs inpd2" style="left:154.500px;top:609.500px;width:52px;height:18px"></div>
<div class="t" style="left:183.20px;top:613.73px;font-size:11.3px;color:#000;transform:scaleX(0.9276);transform-origin:0 0;">0.00</div>
<div class="t" style="left:209.64px;top:613.73px;font-size:11.3px;color:#000;">m</div>
<div class="t" style="left:54.30px;top:640.03px;font-size:11.3px;color:#000;transform:scaleX(0.9260);transform-origin:0 0;">Actual length</div>
<div class="abs inpd2" style="left:154.500px;top:636px;width:52px;height:18px"></div>
<div class="t" style="left:183.20px;top:640.03px;font-size:11.3px;color:#000;transform:scaleX(0.9276);transform-origin:0 0;">0.00</div>
<div class="t" style="left:209.64px;top:640.03px;font-size:11.3px;color:#000;">m</div>
<div class="abs" style="left:231.0px;top:639.0px;width:13px;height:13px;border:1px solid #8e8f8f;background:linear-gradient(135deg,#d4d8de,#fff)"></div><svg class="abs" style="left:231.0px;top:639.0px" width="13" height="13" viewBox="0 0 13 13"><path d="M3 6 L5.500 10 L10 2.500" stroke="#32449c" stroke-width="2" fill="none"/></svg>
<div class="t" style="left:247.20px;top:640.53px;font-size:11.3px;color:#000;transform:scaleX(0.9048);transform-origin:0 0;">Automatically</div>
<div class="t" style="left:54.30px;top:667.53px;font-size:11.3px;color:#000;transform:scaleX(0.9134);transform-origin:0 0;">Wire arrangement</div>
<div class="abs btn cmb" style="left:154.0px;top:662.0px;width:86.0px;height:21.0px"></div><div class="t" style="left:157.40px;top:667.53px;font-size:11.3px;color:#000;transform:scaleX(0.9200);transform-origin:0 0;">buried</div><svg class="abs" style="left:227.7px;top:671.0px" width="8" height="5"><path d="M0 0h7L3.500 4z" fill="#000"/></svg>
<div class="t" style="left:327.90px;top:610.63px;font-size:11.3px;color:#000;transform:scaleX(0.9229);transform-origin:0 0;">Installation level</div>
<div class="abs inpd" style="left:429px;top:606.500px;width:53px;height:19px"></div>
<div class="t" style="left:472.86px;top:610.63px;font-size:11.3px;color:#8a8a8a;">0</div>
<div class="t" style="left:485.30px;top:610.63px;font-size:11.3px;color:#000;transform:scaleX(0.9228);transform-origin:0 0;">cm</div>
<div class="t" style="left:327.90px;top:632.03px;font-size:11.3px;color:#000;transform:scaleX(0.8974);transform-origin:0 0;">Ambient</div>
<div class="t" style="left:327.90px;top:644.53px;font-size:11.3px;color:#000;transform:scaleX(0.9077);transform-origin:0 0;">temperature</div>
<div class="abs btn cmb" style="left:430.0px;top:633.0px;width:52.0px;height:21.0px"></div><div class="t" style="left:433.50px;top:638.43px;font-size:11.3px;color:#000;transform:scaleX(0.9786);transform-origin:0 0;">20</div><svg class="abs" style="left:470.5px;top:641.9px" width="8" height="5"><path d="M0 0h7L3.500 4z" fill="#000"/></svg>
<div class="t" style="left:487.40px;top:637.53px;font-size:11.3px;color:#000;transform:scaleX(0.7966);transform-origin:0 0;">°C</div>
<div class="t" style="left:327.90px;top:660.43px;font-size:11.3px;color:#000;transform:scaleX(0.9551);transform-origin:0 0;">Voltage factor</div>
<div class="abs btn cmb" style="left:429.0px;top:662.0px;width:53.0px;height:21.0px"></div><div class="t" style="left:433.10px;top:667.53px;font-size:11.3px;color:#000;transform:scaleX(0.9276);transform-origin:0 0;">0.95</div><svg class="abs" style="left:470.0px;top:671.0px" width="8" height="5"><path d="M0 0h7L3.500 4z" fill="#000"/></svg>
<div class="abs" style="left:53px;top:692px;width:198px;height:1px;background:#a0a0a0"></div>
<div class="abs" style="left:307px;top:692px;width:200px;height:1px;background:#a0a0a0"></div>
<div class="t" style="left:253.30px;top:687.83px;font-size:11.3px;color:#8a8a8a;transform:scaleX(0.9146);transform-origin:0 0;">Protections</div>
<div class="abs" style="left:54.0px;top:711.0px;width:13px;height:13px;border:1px solid #b8b8b8;background:linear-gradient(135deg,#f0f0f0,#fafafa)"></div>
<div class="abs btn dis2" style="left:77.0px;top:707.0px;width:163.0px;height:21.0px"></div>
<div class="t" style="left:120.70px;top:713.23px;font-size:11.3px;color:#8a8a8a;transform:scaleX(0.9262);transform-origin:0 0;">Initial protection</div>
<div class="abs" style="left:307.0px;top:711.0px;width:13px;height:13px;border:1px solid #b8b8b8;background:linear-gradient(135deg,#f0f0f0,#fafafa)"></div>
<div class="abs btn dis2" style="left:329.0px;top:707.0px;width:160.0px;height:21.0px"></div>
<div class="t" style="left:364.50px;top:713.23px;font-size:11.3px;color:#8a8a8a;transform:scaleX(0.9249);transform-origin:0 0;">Terminal protection</div>
<div class="abs shdr" style="left:36px;top:736px;width:471px;height:16px"></div><svg class="abs" style="left:41px;top:738px" width="11" height="11" viewBox="0 0 11 11"><rect x=".5" y=".5" width="10" height="10" rx="2" fill="#b9b9b9" stroke="#e6e6e6"/><path d="M2.500 3.500 L5.500 7 L8.500 3.500" stroke="#f4f4f4" stroke-width="1.200" fill="none"/></svg><div class="t" style="left:232.60px;top:738.93px;font-size:11.3px;color:#e8e8e8;transform:scaleX(0.9105);transform-origin:0 0;">Type parameters</div><div class="t" style="left:232.00px;top:738.33px;font-size:11.3px;color:#3a3a3a;transform:scaleX(0.9105);transform-origin:0 0;">Type parameters</div>
<div class="t" style="left:53.20px;top:759.63px;font-size:11.3px;color:#000;transform:scaleX(0.9263);transform-origin:0 0;">Conductor metal</div>
<div class="abs btn cmb" style="left:172.0px;top:755.0px;width:86.0px;height:21.0px"></div><div class="t" style="left:175.50px;top:761.03px;font-size:11.3px;color:#000;transform:scaleX(0.9201);transform-origin:0 0;">Copper</div><svg class="abs" style="left:245.5px;top:764.0px" width="8" height="5"><path d="M0 0h7L3.500 4z" fill="#000"/></svg>
<div class="t" style="left:53.20px;top:785.63px;font-size:11.3px;color:#000;transform:scaleX(0.9309);transform-origin:0 0;">Conductor insulation</div>
<div class="abs btn cmb" style="left:172.0px;top:781.0px;width:86.0px;height:21.0px"></div><div class="t" style="left:175.50px;top:787.03px;font-size:11.3px;color:#000;transform:scaleX(0.9344);transform-origin:0 0;">XLPE</div><svg class="abs" style="left:245.5px;top:790.0px" width="8" height="5"><path d="M0 0h7L3.500 4z" fill="#000"/></svg>
<div class="t" style="left:53.20px;top:811.83px;font-size:11.3px;color:#000;transform:scaleX(0.9261);transform-origin:0 0;">Cable cross-section</div>
<div class="abs btn cmb" style="left:172.0px;top:807.0px;width:86.0px;height:21.0px"></div><div class="t" style="left:175.51px;top:813.03px;font-size:11.3px;color:#000;">4</div><svg class="abs" style="left:245.5px;top:815.9px" width="8" height="5"><path d="M0 0h7L3.500 4z" fill="#000"/></svg>
<div class="t" style="left:261.40px;top:812.53px;font-size:11.3px;color:#000;transform:scaleX(0.8367);transform-origin:0 0;">mm²</div>
<div class="t" style="left:54.30px;top:837.83px;font-size:11.3px;color:#000;transform:scaleX(0.9061);transform-origin:0 0;">Inside diameter</div>
<div class="abs inp" style="left:173px;top:833.500px;width:52px;height:18.500px"></div>
<div class="t" style="left:201.50px;top:837.83px;font-size:11.3px;color:#000;transform:scaleX(0.9230);transform-origin:0 0;">15.5</div>
<div class="t" style="left:228.50px;top:837.83px;font-size:11.3px;color:#000;transform:scaleX(0.8339);transform-origin:0 0;">mm</div>
<div class="t" style="left:330.00px;top:753.53px;font-size:11.3px;color:#000;transform:scaleX(0.9411);transform-origin:0 0;">Network</div>
<div class="t" style="left:330.00px;top:766.13px;font-size:11.3px;color:#000;transform:scaleX(0.8954);transform-origin:0 0;">layout</div>
<div class="abs btn cmb" style="left:414.0px;top:755.0px;width:86.0px;height:21.0px"></div><div class="t" style="left:418.30px;top:761.03px;font-size:11.3px;color:#000;transform:scaleX(0.8819);transform-origin:0 0;">TN-C</div><svg class="abs" style="left:487.7px;top:764.0px" width="8" height="5"><path d="M0 0h7L3.500 4z" fill="#000"/></svg>
<div class="t" style="left:330.00px;top:779.53px;font-size:11.3px;color:#000;transform:scaleX(0.9051);transform-origin:0 0;">Phase</div>
<div class="t" style="left:330.00px;top:792.53px;font-size:11.3px;color:#000;transform:scaleX(0.9145);transform-origin:0 0;">structure</div>
<div class="abs btn cmb" style="left:414.0px;top:781.0px;width:86.0px;height:21.0px"></div><div class="t" style="left:417.46px;top:787.03px;font-size:11.3px;color:#000;">1</div><svg class="abs" style="left:487.7px;top:790.0px" width="8" height="5"><path d="M0 0h7L3.500 4z" fill="#000"/></svg>
<div class="t" style="left:330.00px;top:811.83px;font-size:11.3px;color:#000;transform:scaleX(0.9089);transform-origin:0 0;">Cable type</div>
<div class="abs btn cmb" style="left:414.0px;top:807.0px;width:86.0px;height:21.0px"></div><div class="t" style="left:418.30px;top:813.03px;font-size:11.3px;color:#000;transform:scaleX(0.8949);transform-origin:0 0;">Multi wire</div><svg class="abs" style="left:487.7px;top:815.9px" width="8" height="5"><path d="M0 0h7L3.500 4z" fill="#000"/></svg>
<div class="abs" style="left:33px;top:865px;width:477px;height:1px;background:#a7a7a7"></div>
<div class="abs btn" style="left:167.0px;top:874.0px;width:99.0px;height:23.0px"></div>
<div class="t" style="left:176.10px;top:880.53px;font-size:11.3px;color:#000;transform:scaleX(0.9292);transform-origin:0 0;">Save to template</div>
<div class="abs btn" style="left:268.0px;top:874.0px;width:17.0px;height:23.0px"></div>
<svg class="abs" style="left:273.1px;top:883.5px" width="8" height="5"><path d="M0 0h7L3.500 4z" fill="#000"/></svg>
<div class="abs btn dis2" style="left:292.0px;top:874.0px;width:38.0px;height:23.0px"></div>
<svg class="abs" style="left:302px;top:878px" width="18" height="15" viewBox="0 0 18 15"><path d="M1 1.500 L3.500 9 L9 6.500z" fill="#b4b4b4"/><path d="M4 6 C7 1 16 3 14.500 9 C14 11.500 12 13.500 9.500 14.500" fill="none" stroke="#b4b4b4" stroke-width="2.800"/></svg>
<div class="abs btn def" style="left:338.0px;top:874.0px;width:78.0px;height:23.0px"></div>
<div class="t" style="left:368.10px;top:880.53px;font-size:11.3px;color:#000;transform:scaleX(0.9616);transform-origin:0 0;">OK</div>
<div class="abs btn" style="left:425.0px;top:874.0px;width:78.0px;height:23.0px"></div>
<div class="t" style="left:446.30px;top:880.53px;font-size:11.3px;color:#000;transform:scaleX(0.9382);transform-origin:0 0;">Cancel</div>
<div class="abs" style="left:679px;top:230px;width:258px;height:163px;background:#f0f0f0;border:1px solid #fafafa"></div>
<div class="abs shdr" style="left:683px;top:232px;width:250px;height:17px;border-radius:8px"></div>
<div class="t" style="left:741.80px;top:235.93px;font-size:11.3px;color:#e8e8e8;transform:scaleX(0.9322);transform-origin:0 0;">Buried line » Select location</div>
<div class="t" style="left:741.20px;top:235.33px;font-size:11.3px;color:#333;transform:scaleX(0.9322);transform-origin:0 0;">Buried line » Select location</div>
<svg class="abs" style="left:917px;top:235px" width="12" height="11" viewBox="0 0 12 11"><rect x=".5" y=".5" width="11" height="10" rx="1.500" fill="#c8c8c8" stroke="#6a6a6a"/><path d="M3 2.500 L9 8.500 M9 2.500 L3 8.500" stroke="#6a6a6a" stroke-width="1.300"/></svg>
<div class="t" style="left:687.90px;top:262.83px;font-size:11.3px;color:#000;transform:scaleX(0.9166);transform-origin:0 0;">Installation level</div>
<div class="abs inp" style="left:778px;top:258px;width:49px;height:19.500px"></div>
<div class="t" style="left:818.30px;top:262.83px;font-size:11.3px;color:#000;">0</div>
<div class="t" style="left:831.60px;top:262.83px;font-size:11.3px;color:#000;transform:scaleX(0.8830);transform-origin:0 0;">cm</div>
<div class="abs" style="left:685px;top:283px;width:245px;height:1px;background:#a0a0a0"></div>
<div class="abs btn act" style="left:684.0px;top:288.0px;width:21.0px;height:21.0px"></div>
<div class="abs btn act" style="left:709.0px;top:288.0px;width:21.0px;height:21.0px"></div>
<div class="abs btn" style="left:734.0px;top:288.0px;width:21.0px;height:21.0px"></div>
<div class="abs btn act" style="left:759.0px;top:288.0px;width:21.0px;height:10.0px"></div>
<div class="abs btn dis" style="left:759.0px;top:300.0px;width:21.0px;height:9.0px"></div>
<div class="abs inpd" style="left:783px;top:289px;width:49.500px;height:19.500px"></div>
<div class="t" style="left:823.80px;top:293.53px;font-size:11.3px;color:#9a9a9a;">0</div>
<svg class="abs" style="left:683px;top:288px" width="100" height="21" viewBox="0 0 100 21">
<path d="M9 2 V19" stroke="#d02020" stroke-width="1" stroke-dasharray="3 1.500"/><path d="M2 11.500 H19" stroke="#d02020" stroke-width="1" stroke-dasharray="3 1.500"/><path d="M4 17 L8 12.500" stroke="#1a7a1a" stroke-width="1"/><circle cx="8.500" cy="12" r="1.800" fill="#dff" stroke="#1a7a1a" stroke-width="1"/>
<rect x="29" y="8.500" width="8" height="8" fill="#7ad07a" stroke="#145a14" stroke-width="1"/><path d="M30.500 10 l5 5 m0-5 l-5 5" stroke="#c08020" stroke-width="1"/><path d="M33 5.500 h11 M39 3 l3 5 M42 3 l-3 5" stroke="#a02020" stroke-width="1"/>
<path d="M53 13 L66 2" stroke="#d02020" stroke-width="1" stroke-dasharray="3 1.500"/><path d="M58 16 L67 8" stroke="#1a7a1a" stroke-width="1"/><circle cx="57.500" cy="16.500" r="1.800" fill="none" stroke="#1a7a1a" stroke-width="1"/><circle cx="67.500" cy="7.500" r="1.800" fill="none" stroke="#1a7a1a" stroke-width="1"/>
<path d="M79 5.500 h7 m2 0 h7" stroke="#1d3c70" stroke-width="1.600"/><path d="M79 15 h7 m2 0 h7 M87 13 v4" stroke="#8a8a8a" stroke-width="1.300"/>
</svg>
<div class="abs" style="left:685px;top:312px;width:248px;height:1px;background:#a0a0a0"></div>
<div class="abs btn" style="left:685.0px;top:317.0px;width:45.0px;height:45.0px"></div>
<svg class="abs" style="left:698px;top:332px" width="18" height="16" viewBox="0 0 18 16">
<rect x="1.500" y="5.500" width="9" height="9" fill="#f4f4f4" stroke="#333" stroke-width="1"/><path d="M3 8.500h2 M6 8.500h3 M3 11.500h2 M6 11.500h3" stroke="#333" stroke-width="1"/>
<path d="M5 6 L9 1.500 L14 3 L12 8 L8 8.500z" fill="#e8b070" stroke="#7a4a20" stroke-width=".7"/><path d="M13 1.500 h3.500 v6 h-3.500z" fill="#28289a"/>
</svg>
<div class="abs btn" style="left:734.0px;top:317.0px;width:21.0px;height:21.0px"></div>
<div class="abs btn" style="left:759.0px;top:317.0px;width:21.0px;height:21.0px"></div>
<div class="abs btn" style="left:784.0px;top:317.0px;width:21.0px;height:21.0px"></div>
<svg class="abs" style="left:734px;top:317px" width="72" height="21" viewBox="0 0 72 21">
<path d="M5 14 L12 7 M9 7 h3 v3" stroke="#d02020" stroke-width="1.300" fill="none"/><path d="M3 15 v4 M1 17 h4" stroke="#8a8a8a" stroke-width="1"/><path d="M13 6 L15 4" stroke="#222" stroke-width="1"/><circle cx="16" cy="3.500" r="1.700" fill="none" stroke="#222" stroke-width="1"/>
<path d="M30 16 L40 5" stroke="#222" stroke-width="1"/><circle cx="29" cy="16.500" r="1.800" fill="#fe8" stroke="#222" stroke-width="1"/><circle cx="41" cy="4" r="1.800" fill="#fe8" stroke="#222" stroke-width="1"/><path d="M32 7 l7 7" stroke="#d02020" stroke-width="1"/>
<path d="M55 16 L65 5" stroke="#222" stroke-width="1"/><circle cx="54" cy="16.500" r="1.800" fill="#fe8" stroke="#222" stroke-width="1"/><circle cx="66" cy="4" r="1.800" fill="#fe8" stroke="#222" stroke-width="1"/><path d="M58 6 l6 6" stroke="#d02020" stroke-width="1"/><path d="M61 18 l4-4 m-4 0 l1 1 m2 2 l1 1" stroke="#d02020" stroke-width="1"/>
</svg>
<div class="abs btn" style="left:911.0px;top:317.0px;width:20.0px;height:21.0px"></div>
<svg class="abs" style="left:913px;top:320px" width="17" height="15" viewBox="0 0 17 15"><path d="M2 7.500 L6 12 L15 2.500" stroke="#1f7fd8" stroke-width="3.200" fill="none"/><path d="M2.500 7 L6 10.500 L14.500 2" stroke="#5cb0f4" stroke-width="1" fill="none"/></svg>
<div class="abs box" style="left:733px;top:341px;width:200px;height:22.500px"></div>
<div class="t" style="left:736.30px;top:345.43px;font-size:11.3px;color:#000;transform:scaleX(0.9161);transform-origin:0 0;">&lt;New&gt;</div>
<div class="abs btn" style="left:915.0px;top:343.0px;width:15.0px;height:18.0px"></div><svg class="abs" style="left:917.8px;top:344.4px" width="10" height="16" viewBox="0 0 10 16"><path d="M1.500 .5h4.500l2.500 2.500v6.500h-7z" fill="#e8f4ff" stroke="#4a8fd8" stroke-width=".9"/><path d="M6 .5v2.500h2.500" fill="none" stroke="#4a8fd8" stroke-width=".8"/><path d="M1.500 11.500h7L5 15z" fill="#111"/></svg>
<div class="abs btn" style="left:684.0px;top:367.0px;width:80.0px;height:21.0px"></div>
<div class="t" style="left:705.40px;top:372.53px;font-size:11.3px;color:#000;transform:scaleX(0.8658);transform-origin:0 0;">Pens</div>
<svg class="abs" style="left:751.9px;top:375.5px" width="8" height="5"><path d="M0 0h7L3.500 4z" fill="#000"/></svg>
<div class="abs btn" style="left:768.0px;top:367.0px;width:80.0px;height:21.0px"></div>
<div class="t" style="left:787.90px;top:372.53px;font-size:11.3px;color:#000;transform:scaleX(0.8917);transform-origin:0 0;">Fonts</div>
<svg class="abs" style="left:836.3px;top:375.5px" width="8" height="5"><path d="M0 0h7L3.500 4z" fill="#000"/></svg>
<div class="abs btn" style="left:852.0px;top:367.0px;width:79.0px;height:21.0px"></div>
<div class="t" style="left:864.10px;top:372.53px;font-size:11.3px;color:#000;transform:scaleX(0.9217);transform-origin:0 0;">Surfaces</div>
<svg class="abs" style="left:920.0px;top:375.5px" width="8" height="5"><path d="M0 0h7L3.500 4z" fill="#000"/></svg>
</body>
</html>
